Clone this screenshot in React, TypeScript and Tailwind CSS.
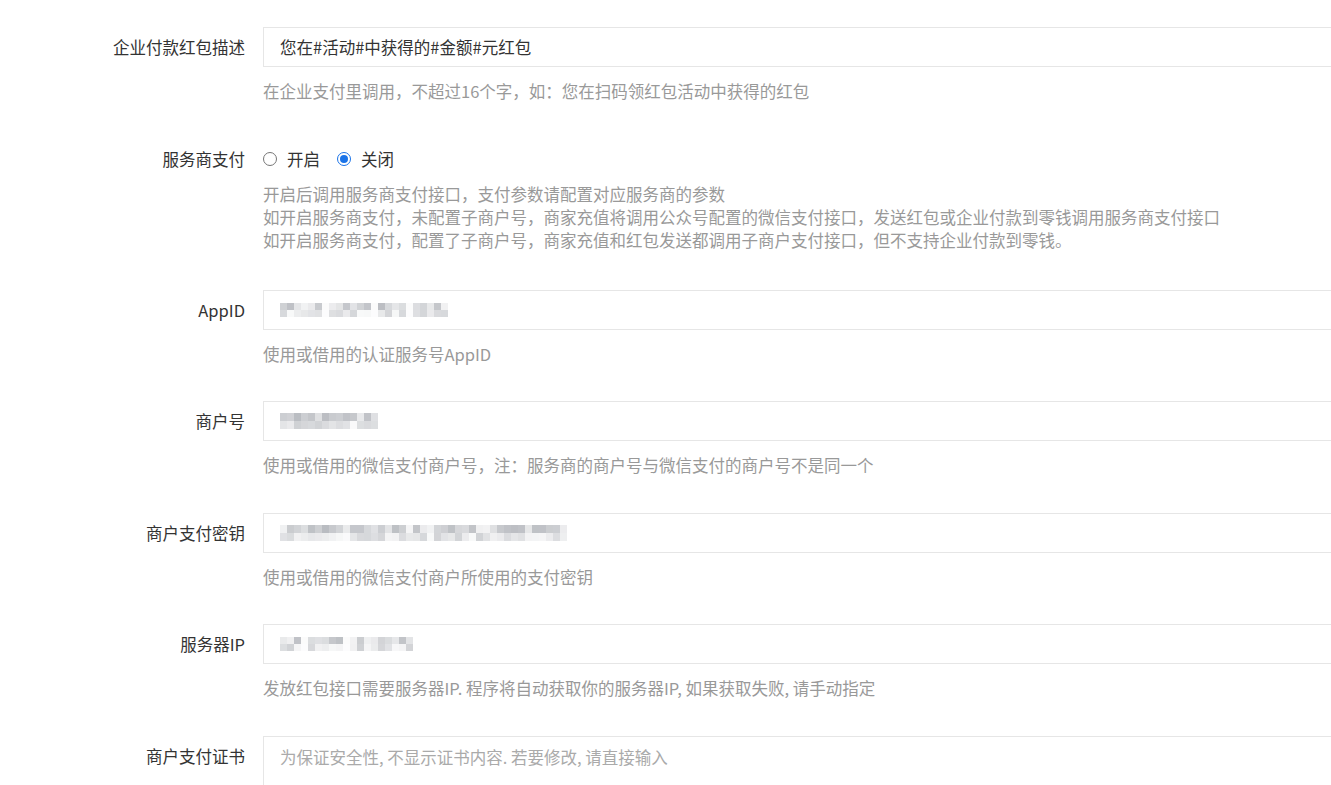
import React from "react";

const FONT = { fontFamily: '"Noto Sans CJK SC", "Noto Sans", sans-serif' };

function Mosaic({ cells, seed, rowH = 7, gaps = [] }: { cells: number; seed: number; rowH?: number; gaps?: number[] }) {
  let s = seed;
  const rnd = () => {
    s = (s * 9301 + 49297) % 233280;
    return s / 233280;
  };
  const rows = [0, 1].map(() =>
    Array.from({ length: cells }, (_, i) => (gaps.includes(i) ? 0.03 : 0.05 + rnd() * 0.45))
  );
  return (
    <div className="flex flex-col blur-[0.4px]">
      {rows.map((r, ri) => (
        <div key={ri} className="flex">
          {r.map((v, i) => (
            <div
              key={i}
              className="w-[7px]"
              style={{ height: rowH, backgroundColor: `rgba(115,120,130,${ri === 1 ? v * 0.7 : v})` }}
            />
          ))}
        </div>
      ))}
    </div>
  );
}

function Label({ children }: { children: React.ReactNode }) {
  return (
    <div className="w-[245px] shrink-0 h-[40px] flex items-center justify-end text-[#333] whitespace-nowrap">
      {children}
    </div>
  );
}

function Help({ lines, mt = "mt-[13px]" }: { lines: string[]; mt?: string }) {
  return (
    <div className={`${mt} text-[#999] leading-[23px] whitespace-nowrap`}>
      {lines.map((l, i) => (
        <div key={i}>{l}</div>
      ))}
    </div>
  );
}

function InputBox({ children }: { children: React.ReactNode }) {
  return (
    <div className="w-[1100px] h-[40px] border border-[#e6e6e6] bg-white flex items-center pl-[16px] text-[#333]">
      {children}
    </div>
  );
}

function Row({
  label,
  mb,
  children,
}: {
  label: string;
  mb: string;
  children: React.ReactNode;
}) {
  return (
    <div className={`flex ${mb}`}>
      <Label>{label}</Label>
      <div className="ml-[18px] flex flex-col shrink-0">{children}</div>
    </div>
  );
}

function Radio({ checked, label }: { checked: boolean; label: string }) {
  return (
    <div className="flex items-center">
      {checked ? (
        <div className="w-[14px] h-[14px] rounded-full border-[1.5px] border-[#1a73e8] flex items-center justify-center">
          <div className="w-[8px] h-[8px] rounded-full bg-[#1a73e8]" />
        </div>
      ) : (
        <div className="w-[14px] h-[14px] rounded-full border-[1.5px] border-[#767676] bg-white" />
      )}
      <span className="ml-[10px] text-[#333]">{label}</span>
    </div>
  );
}

export default function App() {
  return (
    <div
      className="w-[1331px] h-[785px] overflow-hidden bg-white text-[16.5px]"
      style={FONT}
    >
      <div className="pt-[27px]">
        <Row label="企业付款红包描述" mb="mb-[36px]">
          <InputBox>您在#活动#中获得的#金额#元红包</InputBox>
          <Help lines={["在企业支付里调用，不超过16个字，如：您在扫码领红包活动中获得的红包"]} />
        </Row>

        <Row label="服务商支付" mb="mb-[38px]">
          <div className="h-[40px] flex items-center gap-[17px]">
            <Radio checked={false} label="开启" />
            <Radio checked={true} label="关闭" />
          </div>
          <Help
            mt="mt-[4px]"
            lines={[
              "开启后调用服务商支付接口，支付参数请配置对应服务商的参数",
              "如开启服务商支付，未配置子商户号，商家充值将调用公众号配置的微信支付接口，发送红包或企业付款到零钱调用服务商支付接口",
              "如开启服务商支付，配置了子商户号，商家充值和红包发送都调用子商户支付接口，但不支持企业付款到零钱。",
            ]}
          />
        </Row>

        <Row label="AppID" mb="mb-[35px]">
          <InputBox>
            <Mosaic cells={24} seed={11} rowH={7} gaps={[6, 13, 18]} />
          </InputBox>
          <Help lines={["使用或借用的认证服务号AppID"]} />
        </Row>

        <Row label="商户号" mb="mb-[36px]">
          <InputBox>
            <Mosaic cells={14} seed={37} rowH={8} />
          </InputBox>
          <Help lines={["使用或借用的微信支付商户号，注：服务商的商户号与微信支付的商户号不是同一个"]} />
        </Row>

        <Row label="商户支付密钥" mb="mb-[35px]">
          <InputBox>
            <Mosaic cells={41} seed={73} rowH={8} />
          </InputBox>
          <Help lines={["使用或借用的微信支付商户所使用的支付密钥"]} />
        </Row>

        <Row label="服务器IP" mb="mb-[36px]">
          <InputBox>
            <Mosaic cells={19} seed={101} rowH={7} gaps={[3, 9]} />
          </InputBox>
          <Help lines={["发放红包接口需要服务器IP. 程序将自动获取你的服务器IP, 如果获取失败, 请手动指定"]} />
        </Row>

        <div className="flex">
          <Label>商户支付证书</Label>
          <div className="ml-[18px] shrink-0 w-[1100px] h-[100px] border border-[#e6e6e6] bg-white pl-[16px] pt-[7px] text-[#aaa] leading-[26px]">
            为保证安全性, 不显示证书内容. 若要修改, 请直接输入
          </div>
        </div>
      </div>
    </div>
  );
}
